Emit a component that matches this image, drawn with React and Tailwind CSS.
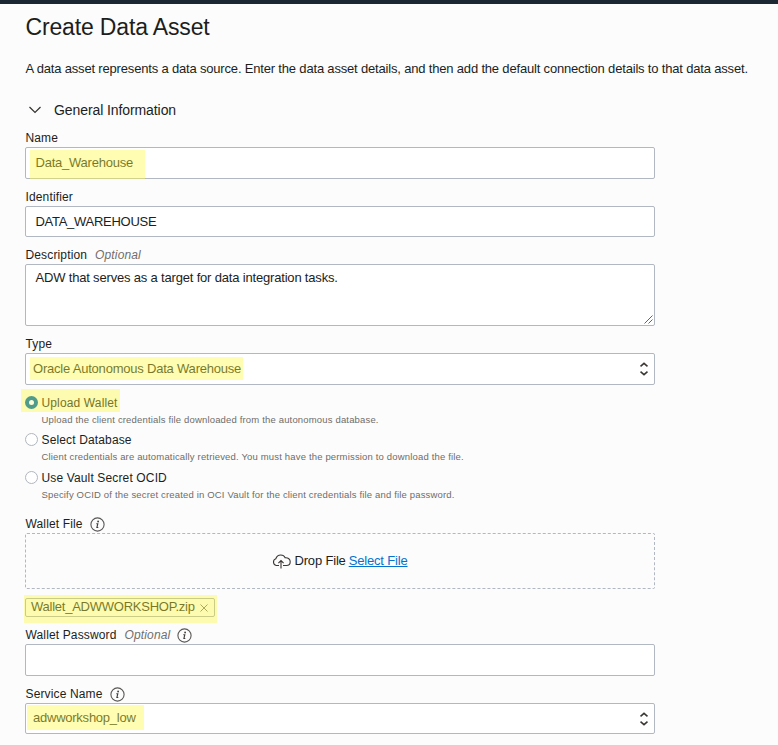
import React from "react";

function InfoIcon({ className = "" }) {
  return (
    <svg className={`size-[15px] shrink-0 ${className}`} viewBox="0 0 15 15" fill="none">
      <circle cx="7.5" cy="7.5" r="6.6" stroke="#5a5856" strokeWidth="1.1" />
      <circle cx="8.1" cy="4.5" r="0.9" fill="#3f3d3b" />
      <path d="M6.3 6.7h1.5l-0.9 3.8h1.4" stroke="#3f3d3b" strokeWidth="1.1" />
    </svg>
  );
}

function SelectArrows() {
  return (
    <svg className="mr-[6px] h-[14px] w-[8px] shrink-0" viewBox="0 0 8 14" fill="none" stroke="#3a3633" strokeWidth="1.6">
      <path d="M0.5 4.4 4 1.4 7.5 4.4M0.5 9.6 4 12.6 7.5 9.6" />
    </svg>
  );
}

function Highlight({ className }) {
  return <span className={`pointer-events-none absolute bg-[#fffa3c]/40 ${className}`} />;
}

function Label({ children, optional, info, className = "" }) {
  return (
    <div className={`flex h-4 items-center pl-[0.5px] text-[12px] leading-4 tracking-[0.14px] ${className}`}>
      <span>{children}</span>
      {optional && <span className="ml-2 italic text-[#716e6b]">Optional</span>}
      {info && <InfoIcon className="ml-[7px]" />}
    </div>
  );
}

function Box({ children, className = "" }) {
  return (
    <div className={`relative mt-px flex items-center rounded-[2px] border border-[#b2b8c2] bg-white text-[13px] leading-4 ${className}`}>
      {children}
    </div>
  );
}

function Radio({ label, hint, checked, className = "" }) {
  return (
    <div className={`relative ${className}`}>
      {checked && <Highlight className="-left-1 -top-1.5 h-[23px] w-[99px]" />}
      <div className="relative flex h-4 items-center text-[12px] leading-4 tracking-[0.14px]">
        {checked ? (
          <span className="mb-px mr-[3.5px] flex size-[13px] items-center justify-center rounded-full bg-[#4f9b8c]">
            <span className="size-[5px] rounded-full bg-[#fffdd8]" />
          </span>
        ) : (
          <span className="mb-px mr-[3.5px] size-[13px] rounded-full border border-[#b0b5bf] bg-white" />
        )}
        <span className={checked ? "text-[#77742a]" : ""}>{label}</span>
      </div>
      <div className="mt-[3px] h-3 whitespace-nowrap pl-[16.5px] text-[9.5px] leading-3 tracking-[0.165px] text-[#6f6c69]">{hint}</div>
    </div>
  );
}

export default function App() {
  return (
    <div className="h-[745px] w-[778px] overflow-hidden bg-[#fcfcfc] font-['Liberation_Sans',Arial,sans-serif] text-[#201e1c]">
      <div className="h-1 bg-[#1b2733]" />
      <main className="ml-[25px] w-[630px]">
        <h1 className="pl-[0.5px] pt-[9px] text-[23px] leading-7 tracking-[-0.15px]">Create Data Asset</h1>
        <p className="mt-5 whitespace-nowrap pl-[0.5px] text-[13px] leading-4 tracking-[-0.178px]">
          A data asset represents a data source. Enter the data asset details, and then add the default connection details to that data asset.
        </p>
        <div className="mt-[25px] flex h-4 items-center text-[14px] leading-4 tracking-[-0.09px]">
          <svg className="mb-px ml-1 mr-[13px] h-[8px] w-[12px]" viewBox="0 0 12 8" fill="none" stroke="#35322f" strokeWidth="1.2">
            <path d="M0.5 1 6 6.5 11.5 1" />
          </svg>
          <span>General Information</span>
        </div>

        <Label className="mt-3">Name</Label>
        <Box className="h-8 pl-[9.5px]">
          <span className="tracking-[-0.23px]">Data_Warehouse</span>
          <Highlight className="left-1 top-[2px] h-[29px] w-[115px]" />
        </Box>

        <Label className="mt-2.5">Identifier</Label>
        <Box className="h-[31px] pl-[9.5px]">
          <span className="mt-px tracking-[-0.28px]">DATA_WAREHOUSE</span>
        </Box>

        <Label className="mt-2.5" optional>Description</Label>
        <Box className="h-[62px] justify-between pl-[9.5px]">
          <span className="mt-[5px] self-start tracking-[-0.18px]">ADW that serves as a target for data integration tasks.</span>
          <svg className="mb-px mr-px size-[9px] self-end" viewBox="0 0 9 9" fill="none" stroke="#55524f" strokeWidth="0.9">
            <path d="M0.5 8.5 8.5 0.5M4.5 8.5 8.5 4.5" />
          </svg>
        </Box>

        <Label className="mt-2.5">Type</Label>
        <Box className="h-8 justify-between pl-[7px]">
          <span className="mb-px tracking-[-0.21px]">Oracle Autonomous Data Warehouse</span>
          <SelectArrows />
          <Highlight className="left-1 top-[3px] h-[23px] w-[213px]" />
        </Box>

        <Radio className="mt-2.5" checked label="Upload Wallet" hint="Upload the client credentials file downloaded from the autonomous database." />
        <Radio className="mt-1.5" label="Select Database" hint="Client credentials are automatically retrieved. You must have the permission to download the file." />
        <Radio className="mt-[7px]" label="Use Vault Secret OCID" hint="Specify OCID of the secret created in OCI Vault for the client credentials file and file password." />

        <Label className="mt-[15px]" info>Wallet File</Label>
        <div className="mt-px flex h-14 items-center justify-center rounded-[2px] border border-dashed border-[#b2b8c2] text-[13px] leading-4 tracking-[-0.17px]">
          <svg className="mr-[3px] mt-px h-[15px] w-[19px]" viewBox="0 0 19 15" fill="none" stroke="#3a3633" strokeWidth="1.1">
            <path d="M7 11.5H4.2A3.5 3.5 0 0 1 3.8 4.8C4.6 2.5 6.5 1 8.8 1c2 0 3.6 1.1 4.4 2.8 3-.3 5 1.5 5 3.9 0 2.2-1.6 3.8-3.8 3.8H11" />
            <path d="M9 14.5V7M6.4 9.2 9 6.6l2.6 2.6" />
          </svg>
          <span className="mb-px">Drop File</span>
          <a className="mb-px ml-[3px] text-[#0572ce] underline">Select File</a>
        </div>

        <div className="relative mt-[9px] flex h-[19px] w-[190px] items-center rounded-[2px] border border-[#a9adb5] pl-[5px] text-[13px] leading-4">
          <span className="mb-[2px] tracking-[-0.24px]">Wallet_ADWWORKSHOP.zip</span>
          <svg className="ml-auto mr-[6px] size-[8px]" viewBox="0 0 8 8" stroke="#77736f" strokeWidth="1">
            <path d="M0.5 0.5 7.5 7.5M7.5 0.5 0.5 7.5" />
          </svg>
          <Highlight className="-left-[2px] -top-1 h-7 w-[193px]" />
        </div>

        <Label className="mt-2.5" optional info>Wallet Password</Label>
        <Box className="h-8" />

        <Label className="mt-2.5" info>Service Name</Label>
        <Box className="h-[31px] justify-between pl-[7px]">
          <span className="mb-px tracking-[-0.24px]">adwworkshop_low</span>
          <SelectArrows />
          <Highlight className="left-px top-px h-[25px] w-[117px]" />
        </Box>
      </main>
    </div>
  );
}
